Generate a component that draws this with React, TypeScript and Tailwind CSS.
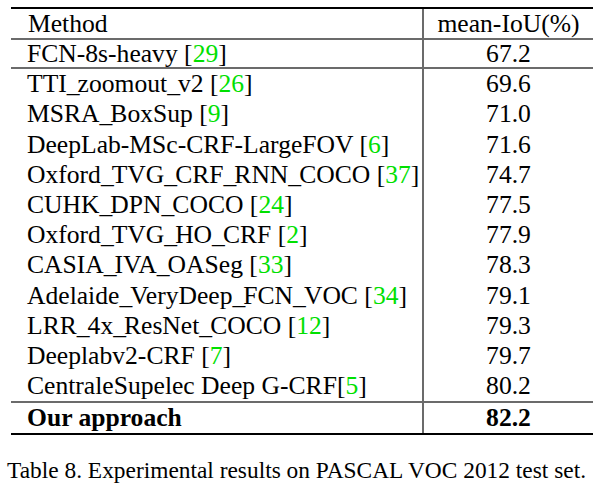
const rows: [string, string, string][] = [
  ['TTI_zoomout_v2 ', '26', '69.6'],
  ['MSRA_BoxSup ', '9', '71.0'],
  ['DeepLab-MSc-CRF-LargeFOV ', '6', '71.6'],
  ['Oxford_TVG_CRF_RNN_COCO ', '37', '74.7'],
  ['CUHK_DPN_COCO ', '24', '77.5'],
  ['Oxford_TVG_HO_CRF ', '2', '77.9'],
  ['CASIA_IVA_OASeg ', '33', '78.3'],
  ['Adelaide_VeryDeep_FCN_VOC ', '34', '79.1'],
  ['LRR_4x_ResNet_COCO ', '12', '79.3'],
  ['Deeplabv2-CRF ', '7', '79.7'],
  ['CentraleSupelec Deep G-CRF', '5', '80.2'],
];

function Ref({ n }: { n: string }) {
  return (
    <>
      [<span className="text-[#00e000]">{n}</span>]
    </>
  );
}

// latex-style underscores come out a bit narrower than the font's glyph
function Name({ text }: { text: string }) {
  const parts = text.split('_');
  return (
    <>
      {parts.map((p, i) => (
        <span key={i}>
          {i > 0 && <span className="tracking-[-2px]">_</span>}
          {p}
        </span>
      ))}
    </>
  );
}

export default function App() {
  return (
    <div className="w-[606px] h-[498px] bg-white text-black pl-[11px] pt-[7px] font-['Liberation_Serif',serif] text-[25.6px] leading-none">
      <div className="w-[582px] border-t-[2px] border-b-[2px] border-black">
        <div className="grid grid-cols-[411px_171px] h-[31px] border-b-[2px] border-[#6b6b6b]">
          <div className="pl-[17px] flex items-center">Method</div>
          <div className="border-l-[2px] border-[#6b6b6b] flex items-center justify-center">mean-IoU(%)</div>
        </div>
        <div className="grid grid-cols-[411px_171px] h-[29px] border-b-[2px] border-[#6b6b6b]">
          <div className="pl-[16px] flex items-center">
            FCN-8s-heavy&nbsp;<Ref n="29" />
          </div>
          <div className="border-l-[2px] border-[#6b6b6b] flex items-center justify-center">67.2</div>
        </div>
        <div className="border-b-[2px] border-[#6b6b6b]">
          {rows.map(([name, ref, val]) => (
            <div key={name} className="grid grid-cols-[411px_171px] h-[30.2px]">
              <div className="pl-[16px] flex items-center whitespace-pre">
                <Name text={name} />
                <Ref n={ref} />
              </div>
              <div className="border-l-[2px] border-[#6b6b6b] flex items-center justify-center">{val}</div>
            </div>
          ))}
        </div>
        <div className="grid grid-cols-[411px_171px] h-[30px] font-bold">
          <div className="pl-[16px] flex items-center">Our approach</div>
          <div className="border-l-[2px] border-[#6b6b6b] flex items-center justify-center">82.2</div>
        </div>
      </div>
      <p className="mt-[24px] -ml-[4px] text-[23.4px]">Table 8. Experimental results on PASCAL VOC 2012 test set.</p>
    </div>
  );
}
